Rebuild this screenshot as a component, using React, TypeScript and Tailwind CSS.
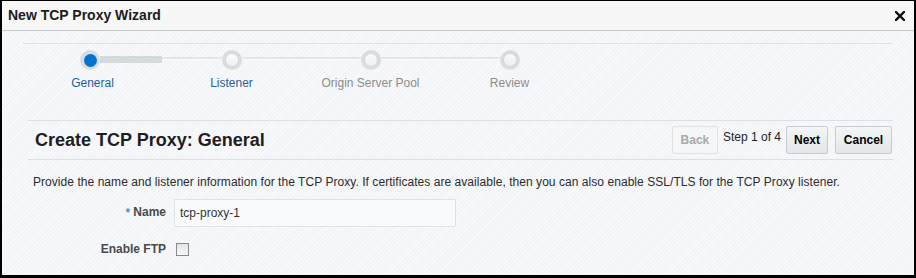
import React from "react";

const font = { fontFamily: '"Liberation Sans", Arial, sans-serif' };

function Step({
  label,
  state,
  left,
  right,
}: {
  label: string;
  state: "active" | "next" | "disabled";
  left: "none" | "thin" | "thick";
  right: "none" | "thin" | "thick";
}) {
  const line = (kind: "none" | "thin" | "thick") =>
    kind === "none" ? (
      <div className="flex-1" />
    ) : kind === "thick" ? (
      <div className="flex-1 h-[7px] bg-[#d4d9db] mt-[-2px]" />
    ) : (
      <div className="flex-1 h-[3px] bg-[#e3e6e8] border-b border-[#fafbfb] mt-[-4px]" />
    );
  const labelColor =
    state === "active"
      ? "text-[#1f5ea8]"
      : state === "next"
      ? "text-[#2c5f8f]"
      : "text-[#8c8c8c]";
  return (
    <div className="w-[139px] flex flex-col items-stretch">
      <div className="flex items-center h-[20px]">
        {line(left)}
        <div className="w-[20px] h-[20px] rounded-full bg-[#d9dde0] flex items-center justify-center shrink-0">
          {state === "active" ? (
            <div className="w-[13px] h-[13px] rounded-full bg-[#0572ce]" />
          ) : (
            <div className="w-[14px] h-[14px] rounded-full bg-gradient-to-b from-[#fafbfc] to-[#eceef0] border border-[#d3d8db]" />
          )}
        </div>
        {right === "thick" ? (
          <div className="flex-1 flex items-center">
            <div className="w-[62px] h-[7px] bg-[#d4d9db] mt-[-2px]" />
            <div className="flex-1 h-[3px] bg-[#e3e6e8] border-b border-[#fafbfb] mt-[-4px]" />
          </div>
        ) : (
          line(right)
        )}
      </div>
      <div className={`text-center text-[12px] mt-[6px] leading-[14px] ${labelColor}`}>{label}</div>
    </div>
  );
}

export default function App() {
  return (
    <div
      style={font}
      className="w-[916px] h-[278px] border-t border-l-2 border-r-2 border-b-[3px] border-black flex flex-col overflow-hidden"
    >
      <div className="h-[30px] shrink-0 bg-[#f7f7f7] border-b border-[#c6cacd] flex items-center justify-between pl-[6px] pr-[9px]">
        <span className="text-[14px] font-bold text-[#1c1c1c]">New TCP Proxy Wizard</span>
        <svg width="10" height="10" viewBox="0 0 10 10">
          <path d="M1 1 L9 9 M9 1 L1 9" stroke="#111" strokeWidth="2.4" strokeLinecap="square" />
        </svg>
      </div>
      <div className="flex-1 bg-[#f3f4f7] bg-[repeating-linear-gradient(135deg,rgba(255,255,255,0.55)_0px,rgba(255,255,255,0.55)_1px,transparent_1px,transparent_3px)] flex flex-col">
        <div className="ml-[21px] mr-[21px] mt-[12px] border-t border-[#dcdfe3]" />
        <div className="flex ml-[21px] mt-[6px]">
          <Step label="General" state="active" left="none" right="thick" />
          <Step label="Listener" state="next" left="thin" right="thin" />
          <Step label="Origin Server Pool" state="disabled" left="thin" right="thin" />
          <Step label="Review" state="disabled" left="thin" right="none" />
        </div>
        <div className="ml-[26px] mr-[21px] mt-[30px] border-t border-[#dcdfe3]" />
        <div className="ml-[26px] mr-[21px] h-[39px] flex items-center justify-between border-b border-[#dcdfe3]">
          <span className="pl-[7px] text-[18px] font-bold text-[#1e1e1e]">Create TCP Proxy: General</span>
          <div className="flex items-center pr-[1px]">
            <div className="h-[28px] w-[46px] rounded-[2px] border border-[#e0e2e4] bg-[#f5f6f7] text-[#a9a9a9] text-[12px] font-bold flex items-center justify-center">
              Back
            </div>
            <span className="ml-[5px] text-[12px] text-[#222] mt-[-6px]">Step 1 of 4</span>
            <div className="ml-[5px] h-[28px] w-[42px] rounded-[2px] border border-[#c4ccd3] bg-gradient-to-b from-[#f3f5f6] to-[#e3e7ea] text-black text-[12px] font-bold flex items-center justify-center">
              Next
            </div>
            <div className="ml-[7px] h-[28px] w-[57px] rounded-[2px] border border-[#c4ccd3] bg-gradient-to-b from-[#f3f5f6] to-[#e3e7ea] text-black text-[12px] font-bold flex items-center justify-center">
              Cancel
            </div>
          </div>
        </div>
        <div className="ml-[31px] mt-[15px] text-[12px] leading-[14px] text-[#2b2b2b] tracking-[0.05px]">
          Provide the name and listener information for the TCP Proxy. If certificates are available, then you can also enable SSL/TLS for the TCP Proxy listener.
        </div>
        <div className="flex items-center mt-[10px]">
          <div className="w-[164px] text-right text-[12px] font-bold text-[#4a4a4a]">
            <span className="text-[#1d6fbd] font-normal mr-[3px] align-top text-[13px]">*</span>Name
          </div>
          <div className="ml-[8px] w-[282px] h-[28px] border border-[#dde3e8] bg-[#f9fafc] rounded-[1px] flex items-center pl-[5px] text-[12px] text-[#333]">
            tcp-proxy-1
          </div>
        </div>
        <div className="flex items-center mt-[13px]">
          <div className="w-[164px] text-right text-[12px] font-bold text-[#4a4a4a]">Enable FTP</div>
          <div className="ml-[10px] w-[13px] h-[13px] border border-[#858a8e] bg-gradient-to-b from-[#e2e5e7] to-[#f6f7f8]" />
        </div>
      </div>
    </div>
  );
}
